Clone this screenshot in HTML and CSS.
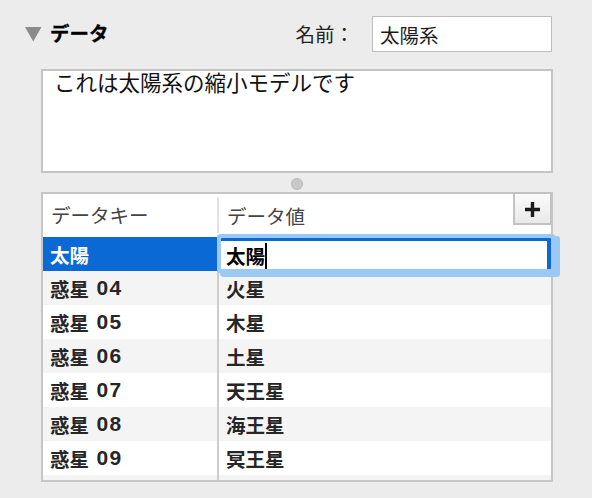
FILE: index.html
```html
<!DOCTYPE html>
<html lang="ja">
<head>
<meta charset="utf-8">
<title>データ</title>
<link rel="stylesheet" href="styles.css">
</head>
<body>
<div class="panel">
  <div class="toprow">
    <div class="disclosure">
      <svg class="tri" width="17" height="16" viewBox="0 0 17 16"><polygon points="0,1 16.5,1 8.25,15.5" fill="#8b8b8b"/></svg>
      <span class="title">データ</span>
    </div>
    <div class="namegroup">
      <span class="label">名前：</span>
      <div class="namefield">太陽系</div>
    </div>
  </div>
  <div class="notes">これは太陽系の縮小モデルです</div>
  <div class="splitter"><span class="dot"></span></div>
  <div class="table">
    <div class="thead">
      <div class="th">データキー</div>
      <div class="th val">データ値</div>
    </div>
    <button class="add" type="button" aria-label="追加">
      <svg width="17" height="17" viewBox="0 0 17 17"><path d="M8.5 1v15M1 8.5h15" stroke="#1a1a1a" stroke-width="3.4" fill="none"/></svg>
    </button>
    <div class="row selected">
      <div class="td">太陽</div>
      <div class="td val"><div class="edit">太陽<span class="caret"></span></div></div>
    </div>
    <div class="row alt"><div class="td">惑星 <span class="num">04</span></div><div class="td val">火星</div></div>
    <div class="row"><div class="td">惑星 <span class="num">05</span></div><div class="td val">木星</div></div>
    <div class="row alt"><div class="td">惑星 <span class="num">06</span></div><div class="td val">土星</div></div>
    <div class="row"><div class="td">惑星 <span class="num">07</span></div><div class="td val">天王星</div></div>
    <div class="row alt"><div class="td">惑星 <span class="num">08</span></div><div class="td val">海王星</div></div>
    <div class="row"><div class="td">惑星 <span class="num">09</span></div><div class="td val">冥王星</div></div>
    <div class="row alt filler"><div class="td"></div><div class="td val"></div></div>
  </div>
</div>
</body>
</html>
```
FILE: styles.css
```css
html, body {
  margin: 0;
  padding: 0;
  background: #ececec;
}
body {
  font-family: "Noto Sans CJK JP", "Noto Sans", sans-serif;
  color: #1f1f1f;
}
.panel {
  width: 512px;
  padding: 16px 0 0 41px;
}
.toprow {
  display: flex;
  align-items: center;
  justify-content: space-between;
  height: 36px;
  margin-left: -16px;
}
.disclosure {
  display: flex;
  align-items: center;
  gap: 8px;
  margin-top: -2px;
}
.tri {
  display: block;
  margin-top: 2px;
}
.title {
  font-size: 19.5px;
  font-weight: 700;
  color: #000;
  line-height: 1;
  -webkit-text-stroke: 0.3px #000;
}
.namegroup {
  display: flex;
  align-items: center;
  gap: 18px;
  margin-right: 1px;
}
.label {
  font-size: 19.5px;
  line-height: 1;
  color: #222;
}
.namefield {
  box-sizing: border-box;
  width: 180px;
  height: 36px;
  border: 1.5px solid #bdbdbd;
  background: #fff;
  font-size: 19.5px;
  line-height: 36px;
  padding-left: 7px;
  color: #1a1a1a;
}
.notes {
  box-sizing: border-box;
  margin-top: 17px;
  height: 104px;
  border: 2px solid #c4c4c4;
  background: #fff;
  font-size: 21.5px;
  line-height: 22px;
  padding: 0 0 0 11px;
  color: #111;
}
.splitter {
  box-sizing: border-box;
  height: 19px;
  padding-top: 5px;
  display: flex;
  justify-content: center;
}
.dot {
  box-sizing: border-box;
  width: 12px;
  height: 12px;
  border-radius: 50%;
  background: #c8c8c8;
  border: 1px solid #b8b8b8;
}
.table {
  position: relative;
  border: 2px solid #c6c6c6;
  background: #fff;
}
.thead {
  display: grid;
  grid-template-columns: 174px 1fr;
  height: 43px;
}
.th {
  display: flex;
  align-items: center;
  padding: 0 0 3px 8px;
  font-size: 19.5px;
  color: #444;
}
.th.val {
  margin: 3px 0 4px;
  border-left: 2px solid #e3e3e3;
  padding-bottom: 0;
}
.add {
  position: absolute;
  top: -2px;
  right: -1px;
  box-sizing: border-box;
  width: 39px;
  height: 33px;
  margin: 0;
  padding: 0;
  border: 2px solid #c2c2c2;
  background: linear-gradient(#fbfbfb, #e9e9e9);
  display: flex;
  align-items: center;
  justify-content: center;
}
.add svg {
  display: block;
  margin-top: 1px;
}
.row {
  display: grid;
  grid-template-columns: 174px 1fr;
  height: 34px;
}
.row.alt {
  background: #f4f4f4;
}
.row.filler {
  height: 5px;
}
.td {
  display: flex;
  align-items: center;
  padding-left: 7px;
  font-family: "Liberation Sans", "Noto Sans CJK JP", sans-serif;
  font-size: 19.5px;
  font-weight: 700;
  color: #262626;
  white-space: pre;
}
.num {
  font-size: 21px;
  letter-spacing: 1.5px;
  margin-left: 2px;
}
.td.val {
  border-left: 2px solid #cdcdcd;
}
.row.selected .td {
  background: #0b69d6;
  color: #fff;
}
.row.selected .td.val {
  background: #fff;
  padding-left: 0;
  align-items: flex-start;
  border-left-color: #0b69d6;
}
.edit {
  position: relative;
  z-index: 1;
  box-sizing: border-box;
  margin: 1px 0 0 2px;
  width: 330px;
  height: 31px;
  border-top: 3px solid #0b69d6;
  border-right: 4px solid #0b69d6;
  border-radius: 1px;
  background: #fff;
  box-shadow: 0 0 0 4px #9cc8f4, 4px 3px 0 5px #9cc8f4;
  color: #000;
  font-size: 19.5px;
  font-weight: 700;
  padding-left: 5px;
  display: flex;
  align-items: center;
}
.caret {
  display: block;
  width: 2px;
  height: 26px;
  background: #000;
  margin-top: 2px;
}
```
